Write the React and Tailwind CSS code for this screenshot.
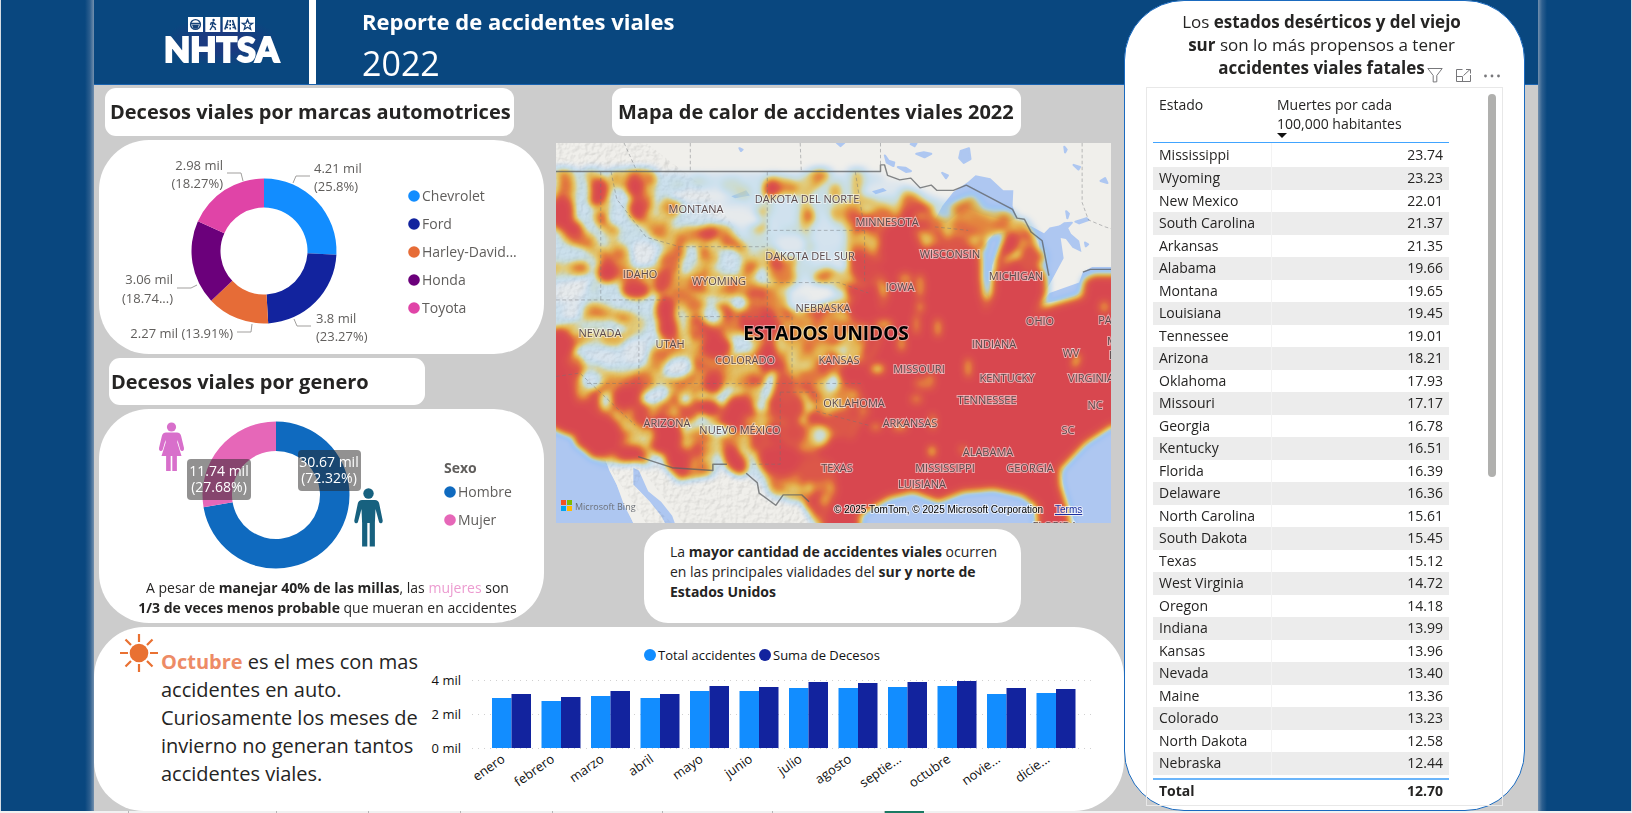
import React from "react";

const BRANDS = [
  { name: "Chevrolet", value: 25.8, color: "#128dff" },
  { name: "Ford", value: 23.27, color: "#12239e" },
  { name: "Harley-David...", value: 13.91, color: "#e66c37" },
  { name: "Honda", value: 18.74, color: "#6b007b" },
  { name: "Toyota", value: 18.27, color: "#e044a7" },
];

const SEXES = [
  { name: "Hombre", value: 72.32, color: "#0f6abf" },
  { name: "Mujer", value: 27.68, color: "#e667b8" },
];

const MONTHS = [
  ["enero", 50, 54],
  ["febrero", 47, 51],
  ["marzo", 52, 57],
  ["abril", 50, 54],
  ["mayo", 57, 62],
  ["junio", 57, 61],
  ["julio", 60, 66],
  ["agosto", 60, 65],
  ["septie...", 61, 66],
  ["octubre", 62, 67],
  ["novie...", 54, 60],
  ["dicie...", 55, 59],
];

const STATES = [
  ["Mississippi", "23.74"],
  ["Wyoming", "23.23"],
  ["New Mexico", "22.01"],
  ["South Carolina", "21.37"],
  ["Arkansas", "21.35"],
  ["Alabama", "19.66"],
  ["Montana", "19.65"],
  ["Louisiana", "19.45"],
  ["Tennessee", "19.01"],
  ["Arizona", "18.21"],
  ["Oklahoma", "17.93"],
  ["Missouri", "17.17"],
  ["Georgia", "16.78"],
  ["Kentucky", "16.51"],
  ["Florida", "16.39"],
  ["Delaware", "16.36"],
  ["North Carolina", "15.61"],
  ["South Dakota", "15.45"],
  ["Texas", "15.12"],
  ["West Virginia", "14.72"],
  ["Oregon", "14.18"],
  ["Indiana", "13.99"],
  ["Kansas", "13.96"],
  ["Nevada", "13.40"],
  ["Maine", "13.36"],
  ["Colorado", "13.23"],
  ["North Dakota", "12.58"],
  ["Nebraska", "12.44"],
];

function Ring({ cx, cy, outer, inner, data }) {
  const total = data.reduce((sum, d) => sum + d.value, 0);
  let start = 0;
  return data.map((d) => {
    const a0 = (start / total) * 2 * Math.PI;
    start += d.value;
    const a1 = (start / total) * 2 * Math.PI;
    const large = a1 - a0 > Math.PI ? 1 : 0;
    const p = (r, a) => `${(cx + r * Math.sin(a)).toFixed(2)},${(cy - r * Math.cos(a)).toFixed(2)}`;
    return (
      <path
        key={d.name}
        fill={d.color}
        d={`M${p(outer, a0)}A${outer},${outer} 0 ${large} 1 ${p(outer, a1)}L${p(inner, a1)}A${inner},${inner} 0 ${large} 0 ${p(inner, a0)}Z`}
      />
    );
  });
}

function Legend({ items }) {
  return (
    <ul className="flex flex-col gap-2">
      {items.map((d) => (
        <li key={d.name} className="flex items-center gap-[2px] text-[14px] leading-[20px] text-[#605e5c]">
          <svg width="12" height="12" viewBox="0 0 12 12">
            <circle cx="6" cy="6" r="5.8" fill={d.color} />
          </svg>
          {d.name}
        </li>
      ))}
    </ul>
  );
}

function BrandDonut() {
  return (
    <svg viewBox="0 0 300 214" className="w-[300px] shrink-0" fontSize="13" fill="#605e5c">
      <Ring cx={165} cy={111} outer={72.5} inner={43.5} data={BRANDS} />
      <g fill="none" stroke="#a19f9d">
        <path d="M194 43L197 36H211" />
        <path d="M144 41L142 33H128" />
        <path d="M98 145L92 148H78" />
        <path d="M153 184L152 192H138" />
        <path d="M195 179L198 186H212" />
      </g>
      <text x="215" y="33">4.21 mil</text>
      <text x="215" y="51">(25.8%)</text>
      <text x="124" y="30" textAnchor="end">2.98 mil</text>
      <text x="124" y="48" textAnchor="end">(18.27%)</text>
      <text x="74" y="144" textAnchor="end">3.06 mil</text>
      <text x="74" y="163" textAnchor="end">(18.74...)</text>
      <text x="134" y="198" textAnchor="end">2.27 mil (13.91%)</text>
      <text x="217" y="183">3.8 mil</text>
      <text x="217" y="201">(23.27%)</text>
    </svg>
  );
}

function SexDonut() {
  return (
    <svg viewBox="0 0 300 165" className="w-[300px] shrink-0" fontSize="14" fill="#ffffff" textAnchor="middle">
      <Ring cx={177} cy={86} outer={73.5} inner={44} data={SEXES} />
      <g fill="#d86fcb">
        <circle cx="72.5" cy="18" r="4.6" />
        <path d="M67 23.5h11q3 0 4 3l3 12.500q.4 2.400-1.300 2.900t-2.500-1.400L78.500 31l-.2 2.500 4.200 13.500h-4.600V62h-4.600V47h-1.600v15h-4.600V47h-4.600l4.200-13.500-.2-2.500-2.700 9.500q-.8 1.900-2.500 1.400T60 39l3-12.500q1-3 4-3z" />
      </g>
      <g fill="#17617f">
        <circle cx="269.500" cy="84.500" r="5.200" />
        <path d="M263 91h13q3.400 0 4.200 3.500l3.400 16.500q.5 2.700-1.300 3.200t-2.400-1.800L276.500 100l-.6 14v23.500h-5.200V114h-2.400v23.500h-5.200V114l-.6-14-3.400 12.400q-.6 2.300-2.400 1.800t-1.300-3.200l3.400-16.500Q259.600 91 263 91z" />
      </g>
      <rect x="88" y="50" width="64" height="41" rx="4" fill="#252423" fillOpacity=".5" />
      <rect x="199" y="41" width="63" height="41" rx="4" fill="#252423" fillOpacity=".5" />
      <text x="120" y="67">11.74 mil</text>
      <text x="120" y="83">(27.68%)</text>
      <text x="230" y="58">30.67 mil</text>
      <text x="230" y="74">(72.32%)</text>
    </svg>
  );
}

function MonthChart() {
  return (
    <svg viewBox="0 0 690 184" className="min-w-0 flex-1" fontSize="13" fill="#111111">
      <circle cx="230" cy="28" r="6" fill="#128dff" />
      <text x="238" y="33">Total accidentes</text>
      <circle cx="345" cy="28" r="6" fill="#12239e" />
      <text x="353" y="33">Suma de Decesos</text>
      {[["4 mil", 53], ["2 mil", 87], ["0 mil", 121]].map(([label, y]) => (
        <g key={label}>
          <path d={`M52 ${y}.5H674`} stroke="#d0d0d0" strokeDasharray="1 5" />
          <text x="41" y={y + 5} textAnchor="end">{label}</text>
        </g>
      ))}
      {MONTHS.map(([name, a, b], i) => {
        const x = 72 + i * 49.5;
        return (
          <g key={name}>
            <rect x={x} y={121 - a} width="19.500" height={a} fill="#128dff" />
            <rect x={x + 19.5} y={121 - b} width="19.500" height={b} fill="#12239e" />
            <text textAnchor="end" transform={`translate(${x + 14} 134) rotate(-35)`}>{name}</text>
          </g>
        );
      })}
    </svg>
  );
}

const US_SHAPE =
  "M-60 256H890L920 292 1000 305 1050 330 1110 345 1160 375 1240 385 1275 390 1300 450 1340 520 1352 570 1335 628 1430 600 1440 558 1465 543H1580V985L1517 985 1450 1035 1385 1110 1385 1150 1405 1215 1425 1320H1312L1305 1215 1275 1190 1200 1170 1120 1178 1050 1208 980 1180 920 1195 850 1240 840 1320H745L725 1255 685 1190 640 1170 610 1180 570 1150 530 1115 440 1105 340 1120 240 1075 130 1080 100 1045 60 1010 16 990H-60Z";

const RED_EAST =
  "M930 440L990 430 1010 470 1060 455 1090 470 1130 460 1160 490 1166 600 1178 640 1198 600 1200 540 1250 505 1300 500 1335 550 1338 600 1318 650 1440 612 1448 565 1470 552H1600V975L1517 978 1445 1028 1375 1105 1375 1150 1395 1220 1412 1340H1322L1318 1210 1280 1180 1200 1160 1115 1168 1050 1195 980 1168 915 1185 835 1235 830 1340H750L735 1240 770 1170 760 1110 800 1040 830 980 860 940 830 880 820 820 870 780 890 730 880 670 910 610 900 560 870 530 880 500 910 500Z";

/* Density bands over the field: [path, width, intensity] */
const BANDS = [
  ["M40 260L40 420 110 460 160 520 230 560 300 540 340 480 300 400 330 340", 48, 0.6],
  ["M120 260L150 400 190 480 200 560", 44, 0.6],
  ["M190 270L260 270 250 380 320 430 400 440 470 420 490 470 420 490 400 560 530 580 600 610 560 680 600 760", 50, 0.62],
  ["M470 440L580 540 640 560M600 290L680 300 730 262M530 540L560 500 640 490 640 560", 40, 0.6],
  ["M690 340L700 470M770 300L780 380M830 250L830 350M800 350L1000 340 960 320M560 410L600 300", 26, 0.48],
  ["M820 360L830 480 800 560 740 560M840 400L990 360 1060 400 1170 390 1230 400", 54, 0.64],
  ["M330 560L360 620 400 640 400 700M300 560L350 570 500 590 620 600", 48, 0.62],
  ["M-20 540L90 530M60 690L110 650 180 660 240 690", 34, 0.6],
  ["M620 620L700 680 840 640M640 700L760 720 860 700M650 760L760 800 800 900M680 860L740 900 760 960", 64, 0.66],
  ["M30 760L90 720 170 730 240 700M80 830L200 840 280 800 310 740 400 790", 36, 0.58],
  ["M120 900L260 860 330 800M100 900L60 830M180 900L160 1000 230 1060M230 980L290 950 370 930", 76, 0.7],
  ["M330 860L450 830 560 820 570 890 480 1000 400 1040 390 1120", 90, 0.72],
  ["M420 700L560 640 600 760 570 840M640 830L600 960 650 1050 700 1100 680 1160", 92, 0.74],
  ["M560 1000L620 1150M770 960L720 960 700 1040M520 1030L580 1030", 54, 0.7],
  ["M340 720L400 770 440 860M310 820L260 870M640 720L800 700M660 850L760 830 830 800", 54, 0.68],
  ["M860 640L900 540M840 720L880 680M820 960L740 1000 780 1080 700 1140 740 1230", 82, 0.76],
  ["M240 1080L160 1070M100 950L200 960M1100 370L1140 350M1200 520L1220 470 1270 420 1310 500", 44, 0.68],
  ["M860 430L1000 390 1080 440 1160 430M860 450L840 560 860 700 840 800 840 900", 88, 0.8],
];

/* Hot spots: [cx, cy, rx, ry, rotation, intensity] */
const SPOTS = [
  [40, 290, 14, 36, 0, 0.8], [30, 370, 36, 48, 0, 1], [60, 415, 28, 24, 0, 1], [130, 310, 28, 42, 15, 1], [140, 385, 18, 22, 0, 0.85],
  [230, 295, 26, 32, 0, 1], [235, 360, 24, 32, -10, 1], [270, 275, 18, 18, 0, 0.75], [155, 540, 30, 32, 20, 1], [232, 592, 40, 26, 0, 1],
  [305, 565, 24, 42, 20, 0.95], [335, 525, 18, 18, 0, 0.8], [312, 650, 28, 46, 0, 1], [320, 700, 30, 34, 0, 1], [430, 430, 28, 20, -20, 1],
  [475, 445, 14, 20, 0, 0.85], [415, 485, 18, 20, 0, 0.8], [290, 425, 20, 20, 0, 0.76], [390, 640, 22, 16, 0, 0.78], [390, 700, 18, 18, 0, 0.78],
  [600, 300, 24, 24, 0, 1], [655, 300, 18, 16, 0, 0.72], [728, 265, 22, 16, 0, 0.75], [698, 378, 16, 24, 0, 0.8], [770, 310, 16, 20, 0, 0.62],
  [540, 525, 22, 18, -30, 0.8], [612, 515, 24, 20, 30, 0.95], [640, 560, 18, 18, 0, 0.72], [735, 558, 22, 16, 20, 0.78], [600, 620, 20, 30, 0, 0.72],
  [560, 680, 50, 46, 0, 1], [590, 790, 26, 50, 0, 1], [545, 650, 30, 22, 0, 0.85], [450, 755, 42, 34, 0, 1], [440, 860, 28, 32, 0, 1],
  [500, 940, 34, 58, 25, 1], [430, 930, 34, 26, 20, 1], [25, 750, 42, 52, 0, 1], [70, 795, 18, 16, 0, 0.78], [10, 880, 60, 100, -10, 1],
  [60, 960, 90, 50, 20, 1], [130, 1010, 66, 66, 0, 1], [205, 900, 38, 36, 0, 1], [245, 940, 24, 44, 0, 0.95], [215, 1060, 40, 24, 0, 1],
  [310, 1010, 50, 56, 0, 1], [345, 1080, 34, 46, -20, 1], [375, 930, 30, 34, 0, 0.9], [260, 850, 20, 18, 0, 0.8], [290, 800, 18, 22, 0, 0.7],
  [500, 1080, 28, 46, -30, 1], [560, 1020, 20, 28, 0, 0.95], [600, 1080, 36, 44, -20, 1], [640, 1080, 44, 44, 0, 1], [660, 1000, 32, 34, 0, 0.95],
  [650, 930, 40, 44, 0, 0.95], [640, 870, 22, 40, 0, 0.9], [780, 1060, 54, 50, 0, 1], [720, 1110, 50, 36, 0, 0.9], [785, 970, 40, 36, 0, 0.9],
  [700, 840, 32, 20, 0, 0.78], [815, 830, 34, 36, 0, 1], [770, 690, 26, 20, 0, 0.72], [720, 730, 40, 20, 0, 0.74], [850, 650, 46, 40, 0, 1],
  [850, 530, 38, 42, 0, 0.97], [940, 460, 50, 76, 0, 1], [900, 380, 30, 28, 0, 0.8], [940, 640, 34, 36, 0, 1], [970, 335, 24, 18, -20, 0.82],
  [1040, 390, 22, 30, 0, 0.8], [1085, 460, 30, 30, 0, 0.9], [1115, 355, 24, 18, -40, 0.78], [1215, 403, 28, 16, 0, 0.8], [1160, 400, 40, 20, 0, 0.72],
  [1240, 460, 28, 36, 30, 1], [1295, 500, 26, 40, 0, 0.9], [1272, 410, 14, 20, 0, 0.62], [855, 330, 20, 20, 0, 0.5], [830, 300, 16, 34, 0, 0.5],
  [350, 295, 22, 18, 0, 0.26], [400, 280, 22, 18, 0, 0.26], [490, 290, 30, 22, 0, 0.28], [520, 310, 24, 24, 0, 0.32], [650, 430, 24, 18, 0, 0.3],
  [570, 410, 18, 18, 0, 0.52], [775, 370, 18, 18, 0, 0.6], [110, 580, 20, 18, 0, 0.32], [130, 820, 16, 16, 0, 0.52], [160, 735, 22, 16, 0, 0.6],
];

/* Quiet places: [cx, cy, rx, ry, rotation, intensity] */
const GAPS = [
  [400, 320, 80, 18, 0, 0.03], [500, 380, 70, 26, 10, 0.03], [370, 385, 22, 12, 0, 0.1], [180, 380, 22, 26, 0, 0.12], [95, 310, 10, 40, 0, 0.18],
  [225, 440, 40, 24, 0, 0.18], [250, 490, 30, 38, -20, 0.04], [60, 590, 50, 26, -30, 0.03], [60, 485, 36, 18, 0, 0.15],
  [60, 655, 22, 30, 30, 0.05], [200, 632, 30, 10, 0, 0.12], [385, 490, 14, 20, 0, 0.15], [485, 500, 26, 26, -30, 0.12], [510, 628, 20, 18, 0, 0.1],
  [440, 665, 22, 20, 0, 0.12], [355, 680, 8, 34, 0, 0.3], [560, 455, 30, 14, 0, 0.25], [650, 460, 40, 30, 0, 0.06], [750, 440, 44, 32, 0, 0.1],
  [705, 605, 62, 30, -10, 0.02], [780, 515, 24, 20, 0, 0.08], [690, 530, 30, 14, 0, 0.2], [670, 630, 28, 20, 0, 0.08], [572, 550, 12, 22, 0, 0.12],
  [900, 300, 56, 18, -10, 0.06], [640, 370, 24, 34, 0, 0.12], [740, 330, 12, 40, 0, 0.2], [230, 770, 34, 40, 0, 0.06], [150, 785, 34, 24, 0, 0.08],
  [110, 850, 26, 24, 30, 0.1], [345, 815, 38, 26, -20, 0.06], [185, 705, 20, 12, 0, 0.2], [370, 740, 6, 16, 0, 0.25], [285, 895, 36, 18, -20, 0.06],
  [366, 905, 14, 12, 0, 0.15], [150, 910, 12, 24, 0, 0.2], [455, 995, 32, 12, 10, 0.06], [450, 1035, 9, 18, 0, 0.35], [590, 870, 10, 44, 15, 0.06],
  [570, 925, 16, 14, 30, 0.2], [765, 860, 10, 20, 0, 0.04], [730, 1010, 20, 24, 0, 0.25], [690, 900, 4, 14, -20, 0.35], [622, 740, 6, 24, 0, 0.35],
  [655, 790, 8, 20, 0, 0.35], [690, 710, 22, 6, 0, 0.35], [270, 1010, 5, 20, 0, 0.4], [530, 1060, 8, 26, -40, 0.3],
  [700, 1160, 8, 12, 0, 0.4], [805, 480, 6, 18, 0, 0.35], [510, 885, 12, 6, 0, 0.4], [1060, 365, 22, 18, 0, 0.2],
  [885, 818, 14, 8, 0, 0.35], [1028, 855, 5, 16, 0, 0.45], [1130, 815, 3, 24, 0, 0.45], [1048, 700, 3, 22, 0, 0.45], [990, 690, 3, 26, 0, 0.6],
  [1032, 1055, 4, 10, 0, 0.3], [1034, 970, 3, 20, 0, 0.6], [945, 985, 16, 6, 0, 0.6], [880, 985, 10, 5, 0, 0.6], [1000, 580, 6, 30, 0, 0.6],
  [1422, 795, 4, 16, 20, 0.4], [1498, 640, 8, 12, 0, 0.6], [950, 745, 6, 20, 0, 0.6], [810, 790, 12, 6, 0, 0.55],
  [960, 560, 14, 14, 0, 0.68], [900, 590, 6, 16, 0, 0.5], [990, 905, 12, 10, 0, 0.72], [1115, 1050, 4, 7, 0, 0.65], [1075, 420, 6, 20, 0, 0.45],
  [1000, 640, 6, 14, 0, 0.65], [905, 690, 16, 8, 0, 0.55], [1010, 860, 22, 12, 0, 0.75],
];

/* Map labels in pixels of the 555 x 380 map */
const LABELS = [
  ["MONTANA", 140, 70], ["DAKOTA DEL NORTE", 251, 60], ["MINNESOTA", 331, 83], ["DAKOTA DEL SUR", 254, 117], ["WISCONSIN", 394, 115],
  ["IDAHO", 84, 135], ["WYOMING", 163, 142], ["MICHIGAN", 460, 137], ["IOWA", 344, 148], ["NEBRASKA", 267, 169],
  ["OHIO", 484, 182], ["PA", 549, 181], ["NEVADA", 44, 194], ["UTAH", 114, 205], ["INDIANA", 438, 205], ["COLORADO", 189, 221],
  ["KANSAS", 283, 221], ["WV", 515, 214], ["MISSOURI", 363, 230], ["KENTUCKY", 451, 239], ["VIRGINIA", 535, 239], ["OKLAHOMA", 298, 264],
  ["TENNESSEE", 431, 261], ["NC", 539, 266], ["ARIZONA", 111, 284], ["NUEVO MÉXICO", 184, 291], ["ARKANSAS", 354, 284], ["SC", 512, 291],
  ["ALABAMA", 432, 313], ["TEXAS", 281, 329], ["MISSISSIPPI", 389, 329], ["GEORGIA", 474, 329], ["LUISIANA", 366, 345],
  ["M", 556, 202], ["D", 557, 216], ["FLORIDA", 499, 387],
];

function gray(v) {
  const n = Math.round(v * 255);
  return `rgb(${n},${n},${n})`;
}

function Ellipses({ items, grow = 0 }) {
  return items.map(([cx, cy, rx, ry, rot, v]) => (
    <ellipse key={`${cx}-${cy}`} cx={cx} cy={cy} rx={rx + grow} ry={ry + grow} fill={gray(v)} transform={`rotate(${rot} ${cx} ${cy})`} />
  ));
}

function HeatMap() {
  return (
    <svg viewBox="0 0 555 380" className="block w-full overflow-hidden" role="img" aria-label="Mapa de calor">
      <defs>
        <filter id="grain" filterUnits="userSpaceOnUse" x="-80" y="120" width="1700" height="1220" colorInterpolationFilters="sRGB">
          <feTurbulence type="fractalNoise" baseFrequency=".019" numOctaves="2" seed="11" />
          <feColorMatrix values="2.6 0 0 0 -.8 2.6 0 0 0 -.8 2.6 0 0 0 -.8 0 0 0 0 1" result="noise" />
          <feComposite in="SourceGraphic" in2="noise" operator="arithmetic" k1=".8" k2=".6" />
          <feColorMatrix values="1 0 0 0 0 0 1 0 0 0 0 0 1 0 0 0 0 0 0 1" />
        </filter>
        <filter id="heat" filterUnits="userSpaceOnUse" x="-80" y="120" width="1700" height="1220" colorInterpolationFilters="sRGB">
          <feGaussianBlur stdDeviation="10" />
          <feColorMatrix values="1 0 0 0 0 1 0 0 0 0 1 0 0 0 0 1 0 0 0 0" />
          <feComponentTransfer>
            <feFuncR type="table" tableValues=".4 .55 .72 .87 .89 .89 .87 .85" />
            <feFuncG type="table" tableValues=".66 .78 .82 .76 .66 .5 .36 .28" />
            <feFuncB type="table" tableValues="1 .95 .76 .36 .22 .2 .26 .31" />
            <feFuncA type="table" tableValues="0 .36 .64 .8 .88 .94 .98 1" />
          </feComponentTransfer>
        </filter>
        <filter id="relief" x="0" y="0" width="100%" height="100%" colorInterpolationFilters="sRGB">
          <feTurbulence type="fractalNoise" baseFrequency=".07" numOctaves="4" seed="4" />
          <feDiffuseLighting surfaceScale="3" diffuseConstant="1.1" lightingColor="#ffffff" result="lit">
            <feDistantLight azimuth="225" elevation="60" />
          </feDiffuseLighting>
          <feComposite in="lit" in2="SourceGraphic" operator="in" />
        </filter>
      </defs>
      <g transform="scale(.37 .348) translate(-16 -169)">
        <rect x="0" y="150" width="1560" height="1150" fill="#f0efeb" />
        <g fill="#aec7f1">
          <path d="M0 985L60 1005 110 1060 150 1080 160 1110 180 1150 200 1200 225 1262 230 1300H0Z" />
          <path d="M205 1092L240 1110 265 1170 300 1200 330 1240 350 1300H300L290 1240 255 1190 225 1160Z" />
          <path d="M1040 390L1060 350 1090 310 1130 280 1150 262 1190 270 1225 305 1252 305 1250 350 1262 385 1240 395 1170 375 1120 355 1070 400Z" />
          <path d="M1275 400L1300 408 1335 428 1350 412 1395 402 1408 430 1430 450 1436 482 1412 470 1394 445 1380 442 1388 500 1368 540 1350 575 1335 600 1320 450Z" />
          <path d="M1168 470L1200 430 1240 425 1215 470 1195 520 1186 615 1172 600Z" />
          <path d="M1325 632L1350 600 1430 570 1440 540 1465 525H1540V560L1450 590 1420 612Z" />
          <path d="M1540 975L1450 1030 1380 1110 1390 1170 1430 1300H1560Z" />
          <path d="M830 1300L850 1235 920 1185 980 1170 1050 1200 1120 1165 1200 1160 1300 1190 1320 1300Z" />
          <path stroke="#aec7f1" strokeWidth="6" strokeLinejoin="round" d="M1110 192L1132 184 1136 215 1118 226 1106 212ZM905 205L915 220 930 225 928 235 910 225ZM940 238L960 240 975 250 962 252ZM990 200L1010 196 1030 200 1012 210ZM975 172L990 170 985 178ZM1060 255L1075 262 1070 270ZM775 168H795L785 178ZM512 184L520 188 516 192ZM1420 395L1450 385 1455 390 1430 400ZM1370 415L1390 400 1410 398 1400 410ZM1415 232L1432 238 1428 245ZM1488 278L1500 270 1506 284ZM1395 365L1402 372 1398 385ZM1446 455L1454 460 1448 466ZM1390 180L1396 188 1392 196Z" />
          <path d="M490 322L530 305 540 320 500 328ZM870 308L900 298 910 306 880 316Z" />
        </g>
        <path d="M150 1082L225 1075 225 1150 270 1200 300 1240 330 1300H245L200 1210 180 1150Z" fill="#f1f0ec" />
        <g opacity=".32" style={{ mixBlendMode: "multiply" }}>
          <path d="M16 169H260L420 300 560 500 620 760 560 1000 720 1262H360L250 1110 230 1160 330 1262H260L160 1100 16 980Z" fill="#fff" filter="url(#relief)" />
        </g>
        <g filter="url(#heat)">
          <g filter="url(#grain)">
            <rect x="-80" y="120" width="1700" height="1220" fill="#000" />
            <path d={US_SHAPE} fill={gray(0.12)} />
            <g fill="none" strokeLinecap="round" strokeLinejoin="round">
              {BANDS.map(([d, w]) => (
                <path key={d} d={d} strokeWidth={w + 26} stroke={gray(0.24)} />
              ))}
              {BANDS.map(([d, w, v]) => (
                <path key={d} d={d} strokeWidth={w} stroke={gray(v)} />
              ))}
            </g>
          </g>
          <path d={RED_EAST} fill={gray(1)} stroke={gray(0.85)} strokeWidth="12" />
          <Ellipses items={SPOTS} />
          <Ellipses items={GAPS} grow={4} />
          <path d="M-80 100H890V242H-80ZM-80 1010L30 1005 100 1060 130 1095 240 1085 340 1140 440 1122 530 1125 600 1195 680 1195 740 1320H-80ZM1180 440L1230 430 1205 500 1193 560 1178 600 1168 560Z" fill="#000" />
        </g>
        <g fill="none" stroke="#5d6063" strokeWidth="4" strokeLinejoin="round" opacity=".75">
          <path d="M0 251H893V232H904L912 262 945 275 975 270 1000 298 1030 290 1045 305 1090 305 1125 290 1250 360 1262 385 1282 388 1300 425 1330 450 1348 550" />
          <path d="M238 1070L330 1102 440 1110V1092H478M530 1118L560 1145 565 1175 610 1210 630 1180H680L700 1200M1440 540L1460 532H1540" />
        </g>
        <g fill="none" stroke="#6f7276" strokeWidth="2.500" strokeDasharray="10 7" opacity=".5">
          <path d="M379 169V251M676 169L679 251M893 169V232M1438 169V340L1455 390 1500 410 1530 420M200 169L235 251" />
          <path d="M137 252V620M16 620H312M240 620V850M350 467H587M587 252V668M348 467V668M348 668H650M412 668V1110M587 420H850M587 570H780L860 600M654 668V860M100 860H840M622 885V1092H540M622 885H720V940L860 980M825 252L850 420 850 570M16 840L80 830 230 980M165 252L180 330 260 440 350 467M1040 410L1130 420" />
        </g>
      </g>
      <g fontSize="11" fill="#5b4a4c" textAnchor="middle" stroke="#ffffff" strokeOpacity=".5" strokeWidth="2" paintOrder="stroke">
        {LABELS.map(([name, x, y]) => (
          <text key={name} x={x} y={y}>{name}</text>
        ))}
      </g>
      <text x="270" y="197" fontSize="19" fontWeight="700" textAnchor="middle" fill="#000" stroke="#fff" strokeOpacity=".45" strokeWidth="2" paintOrder="stroke">
        ESTADOS UNIDOS
      </text>
      <g>
        <rect x="5" y="357" width="5" height="5" fill="#f25022" />
        <rect x="11" y="357" width="5" height="5" fill="#7fba00" />
        <rect x="5" y="363" width="5" height="5" fill="#00a4ef" />
        <rect x="11" y="363" width="5" height="5" fill="#ffb900" />
        <text x="19" y="367" fontSize="9" fill="#6b6f76">Microsoft Bing</text>
      </g>
      <g fontSize="10" className="font-['Liberation_Sans',sans-serif]" stroke="#ffffff" strokeOpacity=".7" strokeWidth="2" paintOrder="stroke">
        <text x="278" y="370" fill="#000">© 2025 TomTom, © 2025 Microsoft Corporation</text>
        <a href="#terms">
          <text x="499" y="370" fill="#1b2fa0" textDecoration="underline">Terms</text>
        </a>
      </g>
    </svg>
  );
}

function Logo() {
  return (
    <div className="flex w-[215px] shrink-0 flex-col items-center pt-[17px] pl-[40px]">
      <div className="flex flex-col items-center bg-[radial-gradient(closest-side,#1b3a80_40%,transparent)]">
        <svg width="67" height="15" viewBox="0 0 67 15" fill="none" stroke="#164178" strokeWidth="1.400" aria-hidden="true">
          <path d="M0 0h15v15H0zM17.300 0h15v15h-15zM34.700 0h15v15h-15zM52 0h15v15H52z" fill="#fff" stroke="none" />
          <circle cx="7.500" cy="7.500" r="4.900" />
          <path d="M3 6.500h9M5 8.500h5l-1 2.500H6z" fill="#164178" />
          <circle cx="25.600" cy="3" r="1.200" fill="#164178" stroke="none" />
          <path d="M25 5l-.6 4-2.400 4M24.600 9l2.400 1.600.6 2.400M22.500 8l.6-2 2.200-.9 1.400 2 1.500.6" />
          <path d="M40 3l-3.200 9.500M44.500 3l3.200 9.500M42.200 3v2.500M42.200 7v2M42.200 10.500v2M38 7.500h2.500M44 7.500h2.500M37 10.500h3M44.500 10.500h3" strokeWidth="1.600" />
          <path d="M59.500 2.600l1.400 3.500 3.700.2-2.900 2.300 1 3.600-3.200-2-3.200 2 1-3.600-2.900-2.300 3.700-.2z" strokeWidth="1.300" />
        </svg>
        <span className="text-[34px] leading-[34px] font-black text-white font-['Lato',sans-serif] [-webkit-text-stroke:2px_white]">NHTSA</span>
      </div>
    </div>
  );
}

function TitleCard({ children, className }) {
  return (
    <h2 className={`flex items-center rounded-[11px] bg-white text-[20px] font-bold whitespace-nowrap ${className}`}>
      {children}
    </h2>
  );
}

function StatePanel() {
  return (
    <aside className="z-10 col-start-2 row-span-2 row-start-1 rounded-[60px] border border-[#1a6abf] bg-white">
      <div className="relative pt-[9px]">
        <p className="pr-[38px] pl-8 text-center text-[17px] leading-[23px]">
          Los <b>estados desérticos y del viejo</b>
          <br />
          <b>sur</b> son lo más propensos a tener
          <br />
          <b>accidentes viales fatales</b>
        </p>
        <div className="absolute right-[24px] -bottom-1 flex items-center gap-[13px] text-[#77777a]">
          <button type="button" aria-label="Filtros">
            <svg width="16" height="15" viewBox="0 0 16 15" fill="none" stroke="currentColor" className="block">
              <path d="M.8.500h14.400L9.800 7.500v6.300L6.200 14V7.500z" />
            </svg>
          </button>
          <button type="button" aria-label="Modo de enfoque">
            <svg width="15" height="13" viewBox="0 0 15 13" fill="none" stroke="currentColor" className="block">
              <path d="M6.500.500H.500v12h14V6M.500 7.500h6v5M7.500 6.500l6.500-6M10 .500h4.500V4.500" />
            </svg>
          </button>
          <button type="button" aria-label="Más opciones">
            <svg width="16" height="4" viewBox="0 0 16 4" fill="currentColor" className="block">
              <circle cx="1.500" cy="2" r="1.400" />
              <circle cx="8" cy="2" r="1.400" />
              <circle cx="14.500" cy="2" r="1.400" />
            </svg>
          </button>
        </div>
      </div>
      <div className="mx-[21px] mt-2 flex justify-between border border-[#e8e8e8] pr-[6px] pb-[2px] pl-[6px]">
        <table className="w-[296px] border-collapse text-[14px] leading-[20px]">
          <thead>
            <tr className="border-b border-[#41a4ff]">
              <th className="w-[118px] px-[6px] pt-[7px] text-left align-top font-normal">Estado</th>
              <th className="px-[6px] pt-[7px] text-left align-top leading-[19px] font-normal">
                Muertes por cada
                <br />
                100,000 habitantes
                <svg width="10" height="5" viewBox="0 0 10 5" className="mb-[4px] block">
                  <path d="M0 0h10L5 5z" fill="#111" />
                </svg>
              </th>
            </tr>
          </thead>
          <tbody>
            {STATES.map(([name, rate]) => (
              <tr key={name} className="h-[22px] first:h-6 even:h-[23px] even:bg-[#ececec]">
                <td className="px-[6px] py-0">{name}</td>
                <td className="px-[6px] py-0 text-right even:shadow-[inset_1px_0_#f3f3f3]">{rate}</td>
              </tr>
            ))}
          </tbody>
          <tfoot>
            <tr aria-hidden="true">
              <td colSpan="2" className="h-[4px]" />
            </tr>
            <tr className="h-6 border-t-2 border-[#6bb5fa] font-bold">
              <td className="px-[6px]">Total</td>
              <td className="px-[6px] text-right">12.70</td>
            </tr>
          </tfoot>
        </table>
        <div className="mt-[6px] h-[383px] w-2 rounded-full bg-[#b0b0ae]" />
      </div>
    </aside>
  );
}

const TAB_WIDTHS = ["w-[129px]", "w-[148px]", "w-[92px]", "w-[92px]", "w-[92px]", "w-[110px]", "w-[110px]", "w-[112px]"];

export default function App() {
  return (
    <div className="flex min-h-[813px] flex-col bg-[#09477f] font-['Open_Sans','Noto_Sans',sans-serif] text-[#252423]">
      <div className="grid flex-1 grid-cols-[94px_1fr_94px]">
        <div className="border-l border-[#d5dce4] bg-[linear-gradient(to_left,#7390ae,#2d5f8f_4px,#09477f_9px)]" />
        <main className="grid grid-cols-[1fr_401px_13px] grid-rows-[85px_1fr] bg-[#cccccc]">
          <header className="col-span-3 col-start-1 row-start-1 flex border-b border-[#1a64b0] bg-[#09477f]">
            <Logo />
            <div className="w-[7px] bg-white" />
            <div className="pl-[46px] pt-[7px] text-white">
              <h1 className="text-[22px] leading-[28px] font-bold">Reporte de accidentes viales</h1>
              <p className="text-[34px] leading-[56px]">2022</p>
            </div>
          </header>
          <div className="col-start-1 row-start-2 flex flex-col gap-1 pt-[3px]">
            <div className="grid grid-cols-[450fr_555fr] gap-3 pr-[13px]">
              <div className="flex flex-col gap-1 pl-[5px]">
                <TitleCard className="ml-[6px] h-12 w-[409px] pl-[5px]">Decesos viales por marcas automotrices</TitleCard>
                <section className="flex h-[214px] items-center rounded-[50px] bg-white">
                  <BrandDonut />
                  <div className="pl-[9px] pt-[10px]">
                    <Legend items={BRANDS} />
                  </div>
                </section>
                <TitleCard className="ml-[10px] h-[47px] w-[316px] pl-[2px]">Decesos viales por genero</TitleCard>
                <section className="flex h-[214px] flex-col overflow-hidden rounded-[50px] bg-white">
                  <div className="flex h-[169px] items-start">
                    <SexDonut />
                    <div className="-mr-3 pl-[45px] pt-[48px] text-[14px] text-[#605e5c]">
                      <p className="pb-[3px] leading-[22px] font-bold">Sexo</p>
                      <Legend items={SEXES} />
                    </div>
                  </div>
                  <p className="pl-3 text-center text-[14px] leading-[20px] whitespace-nowrap">
                    A pesar de <b>manejar 40% de las millas</b>, las <span className="text-[#ec9bd0]">mujeres</span> son
                    <br />
                    <b>1/3 de veces menos probable</b> que mueran en accidentes
                  </p>
                </section>
              </div>
              <div className="flex flex-col">
                <TitleCard className="ml-[56px] h-12 w-[409px] pl-[6px]">Mapa de calor de accidentes viales 2022</TitleCard>
                <div className="mt-[7px]">
                  <HeatMap />
                </div>
                <p className="mt-[6px] ml-[88px] h-[94px] w-[377px] rounded-[24px] bg-white pt-[13px] pl-[26px] text-[14px] leading-[20px]">
                  La <b>mayor cantidad de accidentes viales</b> ocurren
                  <br />
                  en las principales vialidades del <b>sur y norte de</b>
                  <br />
                  <b>Estados Unidos</b>
                </p>
              </div>
            </div>
            <section className="flex flex-1 items-start rounded-[50px] bg-white pr-[14px]">
              <svg viewBox="0 0 40 40" className="mt-[6px] ml-[25px] w-10 shrink-0" stroke="#e97132" strokeWidth="2.200" aria-hidden="true">
                <circle cx="20" cy="20" r="9.300" fill="#e97132" stroke="none" />
                <path d="M20 1v8M20 31v8M1 20h8M31 20h8M6.500 6.500l5.500 5.500M28 28l5.500 5.500M33.500 6.500L28 12M12 28l-5.500 5.500" />
              </svg>
              <p className="mt-[21px] ml-[2px] w-[259px] shrink-0 text-[20px] leading-[28px] whitespace-nowrap">
                <b className="text-[#ed8b66]">Octubre</b> es el mes con mas
                <br />
                accidentes en auto.
                <br />
                Curiosamente los meses de
                <br />
                invierno no generan tantos
                <br />
                accidentes viales.
              </p>
              <MonthChart />
            </section>
          </div>
          <StatePanel />
        </main>
        <div className="border-r border-[#d5dce4] bg-[linear-gradient(to_right,#7390ae,#2d5f8f_4px,#09477f_9px)]" />
      </div>
      <footer className="flex h-[2px] bg-[#f1f1f1]">
        {TAB_WIDTHS.map((width, i) => (
          <span key={i} className={`border-r border-[#b5b5b5] ${width}`} />
        ))}
        <span className="w-[39px] bg-[#1a7a63]" />
      </footer>
    </div>
  );
}
